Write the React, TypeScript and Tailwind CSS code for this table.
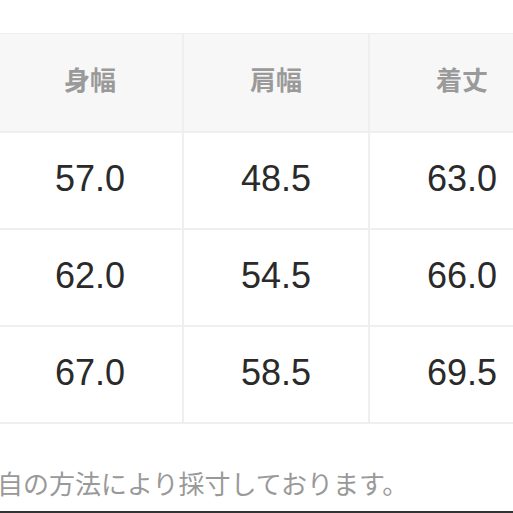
import React from "react";

const header = ["身幅", "肩幅", "着丈"];
const rows = [
  ["57.0", "48.5", "63.0"],
  ["62.0", "54.5", "66.0"],
  ["67.0", "58.5", "69.5"],
];

export default function App() {
  return (
    <div className="w-[513px] h-[513px] overflow-hidden bg-white relative">
      <div className="pt-[33px] ml-[-2px] w-[556px]">
        <div className="grid grid-cols-3 gap-[2px] bg-[#efefef] border-t border-[#eeeeee] border-b-2 border-b-[#efefef]">
          {header.map((h) => (
            <div
              key={h}
              className="h-[97px] bg-[#f7f7f7] flex items-center justify-center text-[26px] font-bold text-[#9a9a9a] pb-[8px]"
              style={{ fontFamily: '"Noto Sans CJK JP", sans-serif' }}
            >
              {h}
            </div>
          ))}
          {rows.map((r, i) =>
            r.map((v, j) => (
              <div
                key={`${i}-${j}`}
                className="h-[95px] bg-white flex items-center justify-center text-[36px] text-[#2a2a2a] pb-[4px]"
                style={{ fontFamily: '"Liberation Sans", Arial, sans-serif' }}
              >
                {v}
              </div>
            ))
          )}
        </div>
      </div>
      <div
        className="mt-[44px] ml-[-3px] whitespace-nowrap text-[26px] leading-[30px] text-[#999999]"
        style={{ fontFamily: '"Noto Sans CJK JP", sans-serif' }}
      >
        自の方法により採寸しております。
      </div>
      <div className="absolute left-0 right-0 bottom-0 h-[2px] bg-[#333333]" />
    </div>
  );
}
